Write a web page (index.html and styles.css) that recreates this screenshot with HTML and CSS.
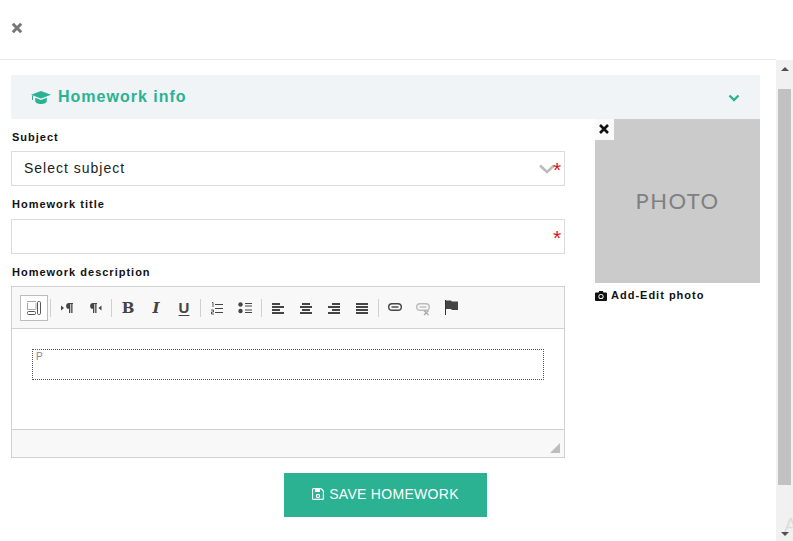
FILE: index.html
```html
<!DOCTYPE html>
<html lang="en">
<head>
<meta charset="utf-8">
<title>Homework info</title>
<link rel="stylesheet" href="styles.css">
</head>
<body>
<div class="window">
  <div class="main">
    <header class="topbar">
      <svg class="close" viewBox="0 0 12 12" width="12" height="12"><path d="M1.800 1.800l8.400 8.400M10.200 1.800l-8.400 8.400" stroke="#777" stroke-width="3" fill="none"/></svg>
    </header>
    <div class="content">
      <div class="section-bar">
        <h2 class="section-title">
          <svg class="cap" viewBox="0 0 20 13" width="20" height="13"><path d="M10 0L0 3.700l10 3.700 10-3.700zM4.200 6.800V10c0 1.700 2.800 3 5.800 3s5.800-1.300 5.800-3V6.800L10 9z" fill="#2ab292"/><path d="M1.500 4.500v4.500" stroke="#2ab292" stroke-width="1"/></svg>
          <span>Homework info</span>
        </h2>
        <svg class="chev" viewBox="0 0 12 8" width="12" height="8"><path d="M1.500 1.500L6 6l4.500-4.500" stroke="#2ab292" stroke-width="2.400" fill="none"/></svg>
      </div>
      <div class="columns">
        <form class="form">
          <label class="label">Subject</label>
          <div class="field">
            <span class="placeholder">Select subject</span>
            <svg class="select-chev" viewBox="0 0 16 10" width="16" height="10"><path d="M1 1.500L8 8l7-6.500" stroke="#bbb" stroke-width="2.400" fill="none"/></svg>
            <span class="req">*</span>
          </div>
          <label class="label label-title">Homework title</label>
          <div class="field field-title"><span class="req">*</span></div>
          <label class="label">Homework description</label>
          <div class="editor">
            <div class="toolbar">
              <span class="tb tb-on"><svg viewBox="0 0 16 16" width="16" height="16"><path d="M1.500 1.500h8.500M1.500 3.500v5M10 3.500v5M1.500 9.500h8.500" stroke="#555" stroke-dasharray="1 1" fill="none"/><rect x="1.500" y="11.500" width="8" height="3" rx="1" fill="none" stroke="#555"/><rect x="11.500" y="1.500" width="3" height="13" rx="1.200" fill="none" stroke="#555"/></svg></span>
              <i class="sep"></i>
              <span class="tb"><svg viewBox="0 0 16 16" width="16" height="16"><path d="M2 5.500l3 2.500-3 2.500z" fill="#444"/><path d="M14 3H10a2.800 2.800 0 0 0 0 5.800V13h1.300V4.100h.9V13h1.300V4.100h.5z" fill="#444"/></svg></span>
              <span class="tb"><svg viewBox="0 0 16 16" width="16" height="16"><path d="M10 3H6a2.800 2.800 0 0 0 0 5.800V13h1.300V4.100h.9V13h1.300V4.100h.5z" fill="#444"/><path d="M14.500 5.500l-3 2.500 3 2.500z" fill="#444"/></svg></span>
              <i class="sep"></i>
              <span class="tb tb-b">B</span>
              <span class="tb tb-i">I</span>
              <span class="tb tb-u">U</span>
              <i class="sep"></i>
              <span class="tb"><svg viewBox="0 0 16 16" width="16" height="16"><path d="M6 4.500h8M6 8.500h8M6 12.500h8" stroke="#444" stroke-width="1.200"/><path d="M3 2.500h1v4.500M2 10h2.500v2H2.500v2H5" stroke="#444" stroke-width=".9" fill="none"/></svg></span>
              <span class="tb"><svg viewBox="0 0 16 16" width="16" height="16"><circle cx="3.500" cy="4.500" r="2.200" fill="#444"/><circle cx="3.500" cy="11" r="2.200" fill="#444"/><path d="M8 3.500h7M8 6h7M8 10h7M8 12.500h7" stroke="#444" stroke-width="1.100"/></svg></span>
              <i class="sep"></i>
              <span class="tb"><svg viewBox="0 0 16 16" width="16" height="16"><path d="M2 4h8M2 7h12M2 10h8M2 13h12" stroke="#444" stroke-width="2"/></svg></span>
              <span class="tb"><svg viewBox="0 0 16 16" width="16" height="16"><path d="M4 4h8M2 7h12M4 10h8M2 13h12" stroke="#444" stroke-width="2"/></svg></span>
              <span class="tb"><svg viewBox="0 0 16 16" width="16" height="16"><path d="M6 4h8M2 7h12M6 10h8M2 13h12" stroke="#444" stroke-width="2"/></svg></span>
              <span class="tb"><svg viewBox="0 0 16 16" width="16" height="16"><path d="M2 4h12M2 7h12M2 10h12M2 13h12" stroke="#444" stroke-width="2"/></svg></span>
              <i class="sep"></i>
              <span class="tb"><svg viewBox="0 0 16 16" width="16" height="16"><rect x="1.700" y="3.700" width="12.600" height="6.600" rx="3.300" fill="none" stroke="#444" stroke-width="1.400"/><path d="M4.500 7h7" stroke="#444" stroke-width="1.400"/></svg></span>
              <span class="tb"><svg viewBox="0 0 16 16" width="16" height="16"><rect x="1.700" y="3.700" width="12.600" height="6.600" rx="3.300" fill="none" stroke="#bbb" stroke-width="1.400"/><path d="M4.500 7h7" stroke="#bbb" stroke-width="1.400"/><path d="M9 10.500l4.500 4.500M13.500 10.500L9 15" stroke="#aaa" stroke-width="1.400"/></svg></span>
              <span class="tb"><svg viewBox="0 0 16 16" width="16" height="16"><path d="M2.500 0v15" stroke="#333"/><path d="M3 .5h5l1 1h6v8.500H9l-1-1H3z" fill="#444"/></svg></span>
            </div>
            <div class="editor-body"><div class="block-p">P</div></div>
            <div class="editor-foot"><svg class="grip" viewBox="0 0 10 10" width="10" height="10"><path d="M10 0v10H0z" fill="#bdbdbd"/></svg></div>
          </div>
        </form>
        <aside class="side">
          <div class="photo">
            <span class="photo-x"><svg viewBox="0 0 12 12" width="12" height="12"><path d="M2 2l8 8M10 2l-8 8" stroke="#111" stroke-width="2.600" fill="none"/></svg></span>
            <span class="photo-text">PHOTO</span>
          </div>
          <div class="add-edit">
            <svg viewBox="0 0 12 10" width="12" height="10"><path d="M0 2.500a1 1 0 0 1 1-1h2.500L4.300 0h3.400l.8 1.500H11a1 1 0 0 1 1 1V9a1 1 0 0 1-1 1H1a1 1 0 0 1-1-1z" fill="#111"/><circle cx="6" cy="5.500" r="2.600" fill="#fff"/><circle cx="6" cy="5.500" r="1.700" fill="#111"/></svg>
            <span>Add-Edit photo</span>
          </div>
        </aside>
      </div>
      <div class="actions">
        <button type="button" class="save">
          <svg viewBox="0 0 12 12" width="12" height="12"><path d="M1.500.6h7.500l2.400 2.400v7.400a1 1 0 0 1-1 1h-8.900a1 1 0 0 1-1-1V1.600a1 1 0 0 1 1-1z" fill="none" stroke="#fff" stroke-width="1.200"/><path d="M3 1h5v3H3z" fill="#fff"/><circle cx="6" cy="8" r="1.600" fill="none" stroke="#fff" stroke-width="1.200"/></svg>
          <span>SAVE HOMEWORK</span>
        </button>
      </div>
    </div>
  </div>
  <div class="scrollbar">
    <span class="arrow-up"></span>
    <div class="thumb"></div>
    <span class="ghost">A</span>
    <span class="arrow-down"></span>
  </div>
</div>
</body>
</html>
```

FILE: styles.css
```css
* { box-sizing: border-box; }
html, body { margin: 0; padding: 0; height: 100%; overflow: hidden; background: #fff; }
body { font-family: "Liberation Sans", Arial, sans-serif; color: #111; }
.window { display: flex; width: 793px; height: 541px; }
.main { width: 776px; display: flex; flex-direction: column; }
.topbar { height: 60px; border-bottom: 1px solid #e7e7e7; padding: 22px 0 0 11px; flex: none; }
.close { display: block; }
.content { padding: 15px 16px 0 11px; }
.section-bar { height: 44px; background: #f0f4f7; display: flex; align-items: center; justify-content: space-between; padding: 0 20px; }
.section-title { margin: 0; display: flex; align-items: center; gap: 7px; font-size: 16px; font-weight: 700; letter-spacing: 1px; color: #2ab292; }
.chev { display: block; margin-top: 2px; }
.columns { display: flex; gap: 30px; }
.form { width: 554px; flex: none; display: flex; flex-direction: column; }
.label { display: block; font-size: 11px; font-weight: 700; letter-spacing: 1px; line-height: 13px; margin: 12px 0 7px 1px; color: #111; }
.label-title { margin-bottom: 8px; }
.field { height: 35px; border: 1px solid #dcdcdc; display: flex; align-items: center; padding: 0 3px 0 12px; }
.field-title { justify-content: flex-end; }
.placeholder { font-size: 14px; letter-spacing: 1px; flex: 1; color: #222; padding-bottom: 2px; }
.select-chev { display: block; margin-right: -2px; }
.req { color: #d8141c; font-size: 21px; line-height: 21px; height: 16px; width: 9px; margin-right: -1px; margin-top: -4px; }
.editor { border: 1px solid #d1d1d1; height: 172px; display: flex; flex-direction: column; }
.toolbar { height: 42px; flex: none; background: #f8f8f8; border-bottom: 1px solid #d1d1d1; display: flex; align-items: center; padding: 0 0 0 8px; }
.tb { width: 28px; height: 26px; flex: none; display: flex; align-items: center; justify-content: center; color: #444; font-family: "DejaVu Serif", serif; font-size: 15px; font-weight: 700; }
.tb svg { display: block; }
.tb-on { border: 1px solid #bcbcbc; background: #fff; }
.tb-i { font-style: italic; }
.tb-u { font-family: "Liberation Sans", sans-serif; text-decoration: underline; text-underline-offset: 2px; font-size: 15px; }
.sep { width: 1px; height: 18px; margin: 0 2px; background: #cfcfcf; flex: none; }
.editor-body { flex: 1; padding: 20px 20px 0; background: #fff; }
.block-p { height: 31px; border: 1px dotted #555; font-size: 10px; line-height: 9px; color: #888; padding: 2px 0 0 3px; }
.editor-foot { height: 28px; flex: none; background: #f8f8f8; border-top: 1px solid #d1d1d1; display: flex; justify-content: flex-end; align-items: flex-end; padding: 0 4px 4px 0; }
.grip { display: block; }
.actions { display: flex; justify-content: center; margin-top: 15px; }
.save { width: 203px; height: 44px; border: 0; background: #2ab292; color: #fff; font-family: inherit; font-size: 14px; letter-spacing: .3px; display: flex; align-items: center; justify-content: center; gap: 5px; padding: 0 0 2px; }
.save svg { display: block; }
.side { width: 165px; flex: none; }
.photo { height: 164px; background: #cbcbcb; display: flex; align-items: center; justify-content: center; position: relative; padding-bottom: 2px; }
.photo-x { position: absolute; left: 0; top: 0; width: 19px; height: 21px; background: #fafafa; display: flex; align-items: center; justify-content: center; padding: 0 1px 1px 0; }
.photo-text { font-family: Lato, sans-serif; font-size: 22px; letter-spacing: 1.400px; color: #808080; }
.add-edit { display: flex; align-items: center; gap: 4px; margin-top: 6px; font-size: 11px; font-weight: 700; letter-spacing: 1px; line-height: 13px; }
.add-edit svg { display: block; }
.scrollbar { width: 17px; flex: none; background: #f1f1f1; display: flex; flex-direction: column; align-items: center; margin-top: 60px; position: relative; overflow: hidden; }
.arrow-up { width: 0; height: 0; border: 4px solid transparent; border-top: 0; border-bottom: 4px solid #505050; margin: 7px 0 0; flex: none; }
.thumb { width: 13px; height: 396px; background: #c1c1c1; margin-top: 18px; flex: none; }
.ghost { position: absolute; left: 8px; top: 454px; font-size: 20px; color: #ddd; }
.arrow-down { width: 0; height: 0; border: 4px solid transparent; border-bottom: 0; border-top: 4px solid #505050; margin-top: auto; margin-bottom: 5px; flex: none; }
```
